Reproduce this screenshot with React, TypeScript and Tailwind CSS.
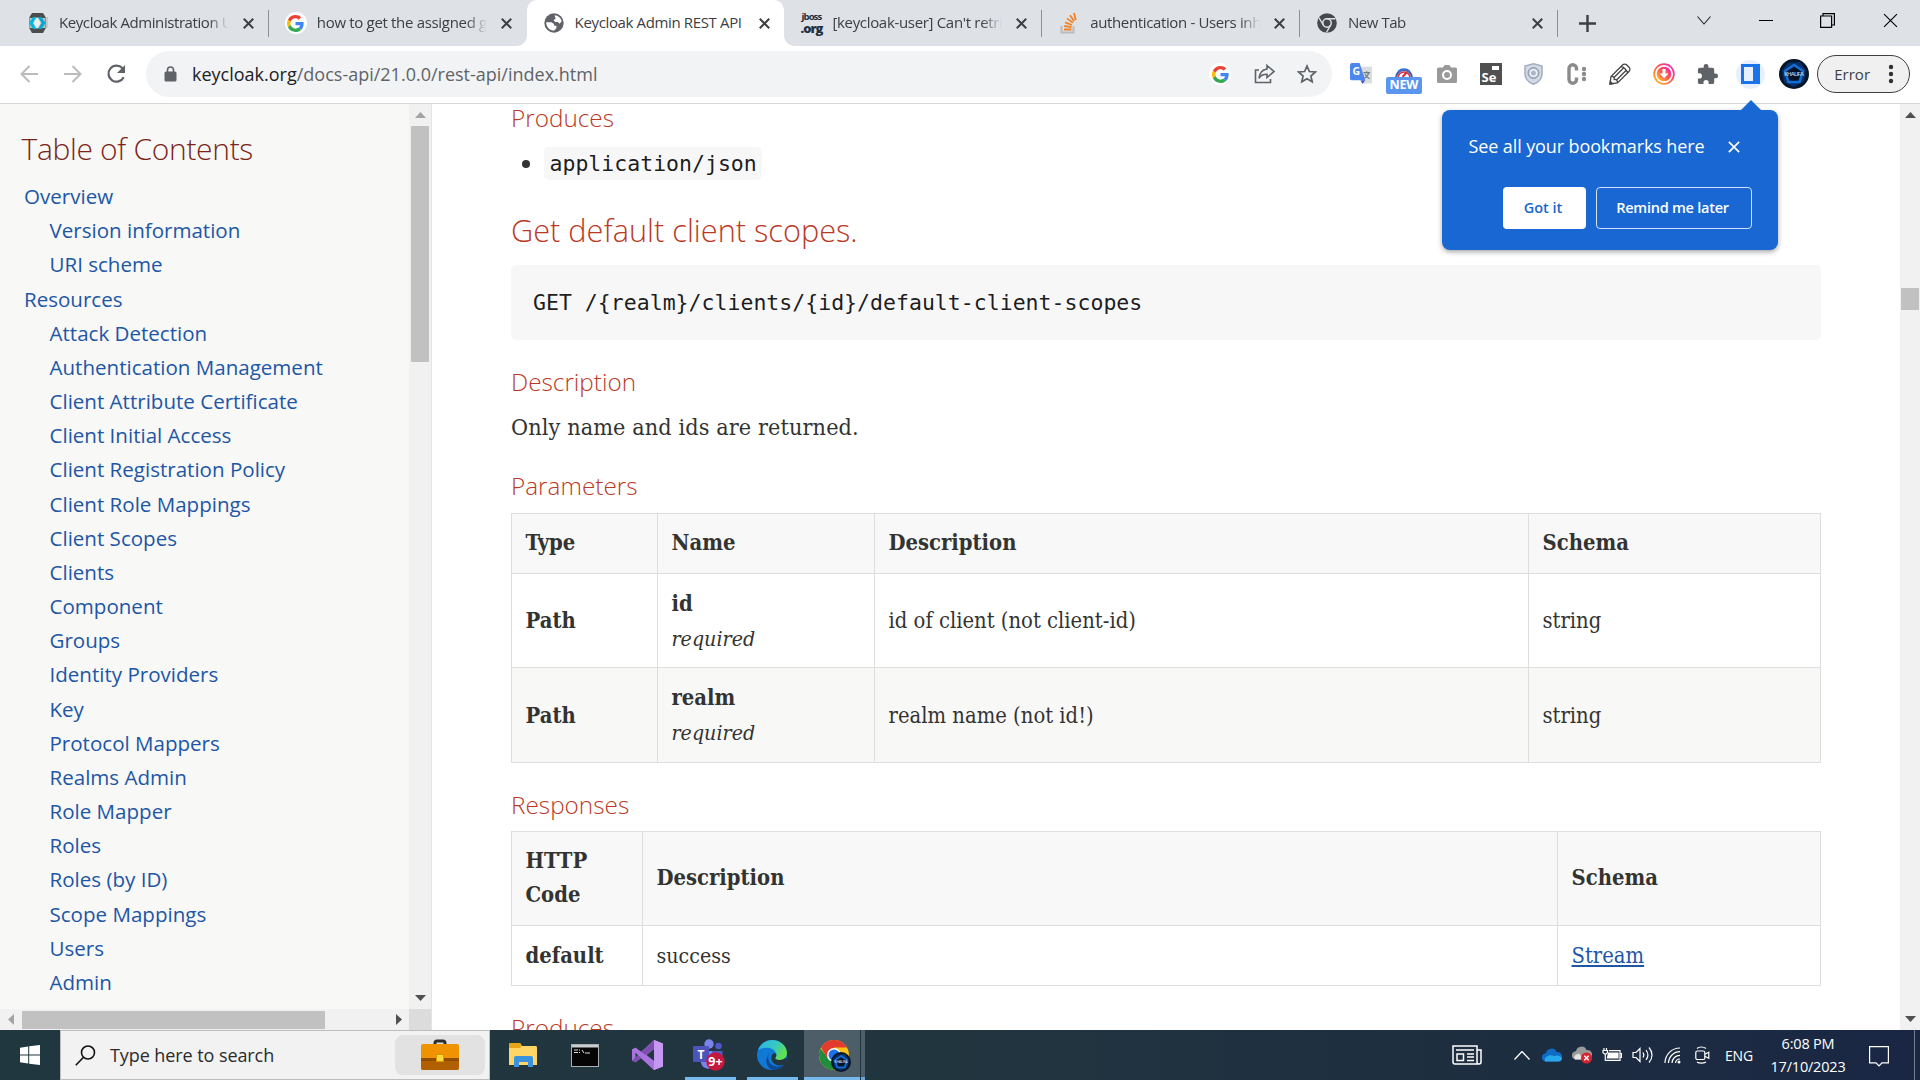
import React from 'react';

const serif = "font-['DejaVu_Serif_Condensed','DejaVu_Serif',serif]";

const toc: [string, boolean][] = [
  ['Overview', false],
  ['Version information', true],
  ['URI scheme', true],
  ['Resources', false],
  ['Attack Detection', true],
  ['Authentication Management', true],
  ['Client Attribute Certificate', true],
  ['Client Initial Access', true],
  ['Client Registration Policy', true],
  ['Client Role Mappings', true],
  ['Client Scopes', true],
  ['Clients', true],
  ['Component', true],
  ['Groups', true],
  ['Identity Providers', true],
  ['Key', true],
  ['Protocol Mappers', true],
  ['Realms Admin', true],
  ['Role Mapper', true],
  ['Roles', true],
  ['Roles (by ID)', true],
  ['Scope Mappings', true],
  ['Users', true],
  ['Admin', true],
];

function Google({ size = 18 }: { size?: number }) {
  return (
    <svg width={size} height={size} viewBox="0 0 48 48">
      <path fill="#ea4335" d="M24 9.5c3.54 0 6.71 1.22 9.21 3.6l6.85-6.85C35.9 2.38 30.47 0 24 0 14.62 0 6.51 5.38 2.56 13.22l7.98 6.19C12.43 13.72 17.74 9.5 24 9.5z" />
      <path fill="#4285f4" d="M46.98 24.55c0-1.57-.15-3.09-.38-4.55H24v9.02h12.94c-.58 2.96-2.26 5.48-4.78 7.18l7.73 6c4.51-4.18 7.09-10.36 7.09-17.65z" />
      <path fill="#fbbc05" d="M10.53 28.59c-.48-1.45-.76-2.99-.76-4.59s.27-3.14.76-4.59l-7.98-6.19C.92 16.46 0 20.12 0 24s.92 7.54 2.56 10.78l7.97-6.19z" />
      <path fill="#34a853" d="M24 48c6.48 0 11.93-2.13 15.89-5.81l-7.73-6c-2.15 1.45-4.92 2.3-8.16 2.3-6.26 0-11.57-4.22-13.47-9.91l-7.98 6.19C6.51 42.62 14.62 48 24 48z" />
    </svg>
  );
}

function GoogleBadge() {
  return (
    <span className="flex size-[22px] shrink-0 items-center justify-center rounded-full bg-white">
      <Google size={17} />
    </span>
  );
}

function KeycloakIcon() {
  return (
    <svg width="20" height="20" viewBox="0 0 20 20">
      <path d="M2 4h18v11H2z" fill="#c6c8ca" />
      <path d="M4 0h11l2.500 4v11.500L15 20H4l-2.500-4.500V4z" fill="#4d4d4d" />
      <path d="M2 5h15v10H2z" fill="#b9c3c8" />
      <path d="M8.500 4 5 10l3.500 6H5L1 10l4-6z" fill="#00b8e3" />
      <path d="m10 4 3.500 6-3.500 6h3.500l4-6-4-6z" fill="#00a9d6" />
      <path d="m8.500 4.500 1 0 3.200 5.500-3.200 5.500h-1L5.500 10z" fill="#e9eff1" />
    </svg>
  );
}

function Globe() {
  return (
    <svg width="20" height="20" viewBox="0 0 20 20">
      <circle cx="10" cy="10" r="9.700" fill="#5f6368" />
      <path d="M10.500 2.200c3.800.3 6.500 2.800 7.200 6l-2.200 2.600-1.700-1.700h-2.600L9.600 7.300l2-1.700z" fill="#fff" />
      <path d="M2.200 9.300h5.200l2.700 1.800v1.600h2.400v2.400l-2.200 2.500C5.700 17.600 2.100 14 2.200 9.300z" fill="#fff" />
    </svg>
  );
}

function JbossIcon() {
  return (
    <span className="flex h-[26px] w-[22px] flex-col items-center justify-center font-['Open_Sans',sans-serif] font-bold text-[#22303f]">
      <span className="text-[9.500px] leading-[11px] tracking-[-0.900px]">jboss</span>
      <span className="text-[13px] leading-[13px] font-extrabold tracking-[-1px]">.org</span>
    </span>
  );
}

function StackIcon() {
  return (
    <svg width="18" height="22" viewBox="0 0 18 22" fill="none">
      <path d="M1.500 14v6.500h12V14" stroke="#bcbbbb" strokeWidth="2" />
      <g stroke="#f48024" strokeWidth="1.800">
        <path d="M4 17.500h7.500M4.200 14l7.400 1.200M5 10.300l7 2.700M7 6.400l6 4.500M10 3.300l4.200 6M14 1l1.800 7" />
      </g>
    </svg>
  );
}

function ChromeMono() {
  return (
    <svg width="20" height="20" viewBox="0 0 20 20">
      <circle cx="10" cy="10" r="9.800" fill="#45494d" />
      <circle cx="10" cy="10" r="4.200" fill="none" stroke="#dee1e6" strokeWidth="1.500" />
      <path d="M10 5.800h8.500M6.300 12 2 4.800M13.600 12.200 9.400 19.500" stroke="#dee1e6" strokeWidth="1.400" />
    </svg>
  );
}

function CloseX({ size = 10, color = '#3c4043', w = 2 }: { size?: number; color?: string; w?: number }) {
  return (
    <svg width={size} height={size} viewBox="0 0 10 10" className="shrink-0">
      <path d="M.7.7l8.600 8.600M9.300.7.7 9.300" stroke={color} strokeWidth={w * 10 / size} />
    </svg>
  );
}

function Tab({ icon, title, active, divider, spacing }: { icon: React.ReactNode; title: string; active?: boolean; divider?: boolean; spacing: string }) {
  return (
    <div className={`relative flex h-full w-[257.800px] shrink-0 items-center pl-[16px] ${active ? 'rounded-t-[10px] bg-white' : ''}`}>
      {active && (
        <>
          <span className="absolute bottom-0 -left-[10px] size-[10px] bg-[radial-gradient(circle_at_0_0,#dee1e6_9.500px,#fff_10px)]" />
          <span className="absolute -right-[10px] bottom-0 size-[10px] bg-[radial-gradient(circle_at_100%_0,#dee1e6_9.500px,#fff_10px)]" />
        </>
      )}
      <span className="flex w-[22px] shrink-0 justify-center">{icon}</span>
      <span className={`mb-[2px] ml-[10px] w-[170px] overflow-hidden text-[15px] leading-[24px] whitespace-nowrap text-[#3c4043] ${spacing} ${active ? '' : 'mask-[linear-gradient(to_right,#000_88%,transparent)]'}`}>
        {title}
      </span>
      <span className="ml-[14px] flex"><CloseX size={11} /></span>
      {divider && <span className="absolute top-[10px] right-0 h-[27px] w-px bg-[#8d9196]" />}
    </div>
  );
}

function ToolSlot({ children }: { children: React.ReactNode }) {
  return <span className="relative flex h-[46px] w-[43.300px] shrink-0 items-center justify-center">{children}</span>;
}

function ProfileBadge({ size }: { size: number }) {
  return (
    <svg width={size} height={size} viewBox="0 0 30 30">
      <circle cx="15" cy="15" r="15" fill="#061527" />
      <path d="M3 12 9 4l12-1 6 9-2 10-10 6-10-5z" fill="#06336e" />
      <path d="m15 6 9 6-3.500 11h-11L6 12z" fill="#051225" stroke="#1170d8" strokeWidth="2.500" />
      <text x="15" y="17" textAnchor="middle" fontSize="6" fontWeight="600" fill="#b8cde4" fontFamily="Open Sans" textLength="20">KHALIFA</text>
    </svg>
  );
}

function Toolbar() {
  return (
    <div className="flex h-[58px] shrink-0 items-center border-b border-[#d5d7da] bg-white pb-[1px]">
      <div className="flex w-[146px] items-center gap-[22px] pl-[19px]">
        <svg width="21" height="20" viewBox="0 0 21 20" fill="none" stroke="#babcbe" strokeWidth="2"><path d="M19 10H3M10.500 2 2.500 10l8 8" /></svg>
        <svg width="21" height="20" viewBox="0 0 21 20" fill="none" stroke="#babcbe" strokeWidth="2"><path d="M2 10h16M10.500 2l8 8-8 8" /></svg>
        <svg width="22" height="20" viewBox="0 0 22 20" fill="none"><path d="M18.700 13.200A8 8 0 1 1 17.500 4.300" stroke="#5f6368" strokeWidth="2.200" /><path d="M20 1v8h-8z" fill="#5f6368" /></svg>
      </div>
      <div className="flex h-[46px] w-[1186px] shrink-0 items-center rounded-full bg-[#f1f3f4] pl-[18px]">
        <svg width="13" height="16" viewBox="0 0 13 16"><path d="M3.500 6V4a3 3 0 0 1 6 0v2" stroke="#5f6368" strokeWidth="1.600" fill="none" /><rect x=".5" y="5.500" width="12" height="10" rx="1.500" fill="#5f6368" /></svg>
        <span className="ml-[15px] text-[18px] whitespace-nowrap text-[#5f6368]"><span className="text-[#202124]">keycloak.org</span>/docs-api/21.0.0/rest-api/index.html</span>
        <span className="flex-1" />
        <GoogleBadge />
        <svg className="ml-[23px]" width="21" height="20" viewBox="0 0 21 20" fill="none" stroke="#5f6368" strokeWidth="1.600"><path d="M5 6H1.500v12.500h15V15" /><path d="M13 1.500 20 7.500l-7 6v-3.200c-4 0-6.500 1-8 4 .4-5 3.500-8.600 8-9.300z" /></svg>
        <svg className="mr-[15px] ml-[22px]" width="20" height="20" viewBox="0 0 20 20" fill="none" stroke="#5f6368" strokeWidth="1.700"><path d="m10 2 2.400 5.500 6 .5-4.500 4 1.300 5.800L10 14.700l-5.200 3.100L6.100 12 1.600 8l6-.5z" /></svg>
      </div>
      <div className="ml-[7px] flex items-center">
        <ToolSlot>
          <svg width="22" height="22" viewBox="0 0 23 23"><path d="M8 4h13.500a1.500 1.500 0 0 1 1.500 1.500V20a1.500 1.500 0 0 1-1.500 1.500H14z" fill="#dadce0" /><path d="M11 18h5l-3 4z" fill="#3a5bb5" /><path d="M1.500 0H10l6 18H1.500A1.500 1.500 0 0 1 0 16.500v-15z" fill="#4c86ee" /><text x="2.500" y="13" fontSize="11" fontWeight="700" fill="#fff" fontFamily="Open Sans">G</text><path d="M14 10h7M17.500 8.500V10M19.500 10c-.5 3-2.500 5-4.500 6M15.500 11.500c1 2 3 4 5 5" stroke="#6b7f87" strokeWidth="1.200" fill="none" /></svg>
        </ToolSlot>
        <ToolSlot>
          <svg className="absolute top-[14px]" width="20" height="18" viewBox="0 0 20 18"><path d="M2 13a8 8 0 0 1 16 0" fill="#fff" stroke="#3b5fa8" strokeWidth="2.200" /><path d="M4.500 6.500A8 8 0 0 1 15.500 6.500" fill="none" stroke="#3f6fd0" strokeWidth="2.200" /><path d="M4 13a6 6 0 0 1 12 0" fill="none" stroke="#d92f46" strokeWidth="1.600" /><path d="m8.500 12 4.500-5" stroke="#d92f36" strokeWidth="2" /></svg>
          <span className="absolute top-[26px] flex h-[17px] w-[36px] items-center justify-center rounded-[2px] bg-[#5a96ef] text-[12.500px] font-bold tracking-[-0.200px] text-white">NEW</span>
        </ToolSlot>
        <ToolSlot>
          <svg width="20" height="18" viewBox="0 0 20 18"><path d="M6 2.500 7.500 0h5L14 2.500h4.500A1.500 1.500 0 0 1 20 4v12.500a1.500 1.500 0 0 1-1.500 1.500h-17A1.500 1.500 0 0 1 0 16.500V4a1.500 1.500 0 0 1 1.500-1.500z" fill="#9a9a9a" /><circle cx="10" cy="10" r="4" fill="#9a9a9a" stroke="#fff" strokeWidth="2" /></svg>
        </ToolSlot>
        <ToolSlot>
          <span className="relative flex size-[22px] items-end bg-[#505050] pl-[2px] text-[13px] leading-[15px] font-bold text-white">Se<span className="absolute top-[3px] right-[3px] h-[4px] w-[7px] bg-white" /></span>
        </ToolSlot>
        <ToolSlot>
          <svg width="19" height="22" viewBox="0 0 19 22"><path d="M9.500.8 18 3v8c0 5-4 8.500-8.500 10.300C5 19.500 1 16 1 11V3z" fill="#d3dae5" stroke="#a3adbd" strokeWidth="1.500" /><circle cx="9.500" cy="10" r="5.500" fill="#a9b6c8" stroke="#8f9db2" /><circle cx="9.500" cy="10" r="3.300" fill="none" stroke="#eef2f7" strokeWidth="1.600" /></svg>
        </ToolSlot>
        <ToolSlot>
          <svg width="20" height="22" viewBox="0 0 20 22" fill="none"><path d="M9.500 7.500V5.500a3.700 3.700 0 0 0-7.500 0v11a3.700 3.700 0 0 0 7.500 0V14.500" stroke="#8b8b8b" strokeWidth="3.400" /><g fill="#8b8b8b"><circle cx="17" cy="6" r="2.200" /><circle cx="17" cy="11" r="2.200" /><circle cx="17" cy="16" r="2.200" /></g></svg>
        </ToolSlot>
        <ToolSlot>
          <svg width="22" height="22" viewBox="0 0 22 22" fill="none" stroke="#454545" strokeWidth="1.300"><path d="m1 21 1-7.500L13.500 2a3 3 0 0 1 4.300 0l2.200 2.200a3 3 0 0 1 0 4.300L8.500 20zM2 13.500c2.500-.5 3.500.7 3.200 3 2.300-.3 3.500 1 3.300 3.500M12 3.500c2.500.3 6 3.500 6.500 6.500M5 14.500 14.500 5M7.500 17l9.500-9.500" /><path d="m1 21 .3-2.500 2.200 2.200z" fill="#454545" /></svg>
        </ToolSlot>
        <ToolSlot>
          <svg width="22" height="22" viewBox="0 0 22 22" fill="none"><defs><linearGradient id="dl" x1="0" y1="1" x2="1" y2="0"><stop stopColor="#ffc01a" /><stop offset=".5" stopColor="#ff5a4a" /><stop offset="1" stopColor="#f01ec5" /></linearGradient></defs><circle cx="11" cy="11" r="9.900" stroke="url(#dl)" strokeWidth="1.700" /><circle cx="11" cy="11" r="6" stroke="url(#dl)" strokeWidth="2.600" fill="#ff5a5a" /><path d="M9.500 6h3v4.500h3L11 15.500 6.500 10.500h3z" fill="#fff" /></svg>
        </ToolSlot>
        <ToolSlot>
          <svg width="23" height="23" viewBox="0 0 24 24" fill="#5f6368"><path d="M20.500 11H19V7a2 2 0 0 0-2-2h-4V3.500a2.500 2.500 0 0 0-5 0V5H4a2 2 0 0 0-2 2v3.800h1.500a2.700 2.700 0 0 1 0 5.400H2V20a2 2 0 0 0 2 2h3.800v-1.500a2.700 2.700 0 0 1 5.400 0V22H17a2 2 0 0 0 2-2v-4h1.500a2.500 2.500 0 0 0 0-5z" /></svg>
        </ToolSlot>
        <ToolSlot>
          <span className="flex size-[29px] items-center justify-center rounded-full bg-[#e8f0fe]"><span className="flex h-[20px] w-[19px] border-[3px] border-r-[7px] border-[#1a73e8] bg-[#e8f0fe]" /></span>
        </ToolSlot>
        <ToolSlot><ProfileBadge size={30} /></ToolSlot>
      </div>
      <div className="ml-[2px] flex h-[38px] w-[93px] items-center rounded-full border-[1.500px] border-[#3c4043] bg-[#f0f0f0] pl-[16px]">
        <span className="text-[15px] text-[#3c4043]">Error</span>
        <svg className="ml-[18px]" width="6" height="20" viewBox="0 0 6 20" fill="#303134"><circle cx="3" cy="3" r="2.200" /><circle cx="3" cy="10" r="2.200" /><circle cx="3" cy="17" r="2.200" /></svg>
      </div>
    </div>
  );
}

function TabStrip() {
  return (
    <div className="flex h-[46px] shrink-0 bg-[#dee1e6] pl-[11px]">
      <Tab icon={<KeycloakIcon />} title="Keycloak Administration UI" divider spacing="tracking-[-0.420px]" />
      <Tab icon={<GoogleBadge />} title="how to get the assigned groups" spacing="tracking-[-0.320px]" />
      <Tab icon={<Globe />} title="Keycloak Admin REST API" active spacing="tracking-[-0.360px]" />
      <Tab icon={<JbossIcon />} title="[keycloak-user] Can't retrieve" divider spacing="tracking-[-0.320px]" />
      <Tab icon={<StackIcon />} title="authentication - Users inherit" divider spacing="tracking-[-0.360px]" />
      <Tab icon={<ChromeMono />} title="New Tab" divider spacing="tracking-[-0.450px]" />
      <div className="flex flex-1 items-center">
        <svg className="ml-[21px]" width="17" height="17" viewBox="0 0 17 17"><path d="M8.500 0v17M0 8.500h17" stroke="#3c4043" strokeWidth="2.400" /></svg>
        <div className="mb-[6px] ml-auto flex items-center">
          <svg width="14" height="9" viewBox="0 0 14 9" fill="none" stroke="#222" strokeWidth="1.100"><path d="m.5.5 6.500 7.500L13.500.5" /></svg>
          <span className="ml-[48px] h-px w-[14px] bg-black" />
          <svg className="ml-[47px]" width="15" height="15" viewBox="0 0 15 15" fill="none" stroke="#000" strokeWidth="1.200"><path d="M.6 3h11v11.400H.6zM3 3V.6h11.400V12h-2.800" /></svg>
          <span className="mr-[22px] ml-[48px] flex"><CloseX size={15} color="#000" w={1.1} /></span>
        </div>
      </div>
    </div>
  );
}

function Arrow({ dir, color = '#505050' }: { dir: 'up' | 'down' | 'left' | 'right'; color?: string }) {
  const d = { up: 'M0 8 5.500 2 11 8z', down: 'M0 3h11L5.500 9z', left: 'M8 0v11L2 5.500z', right: 'M3 0v11l6-5.500z' }[dir];
  return <svg width="11" height="11" viewBox="0 0 11 11" className="shrink-0"><path d={d} fill={color} /></svg>;
}

function Sidebar() {
  return (
    <aside className="flex h-full w-[432px] shrink-0 flex-col border-r border-[#e4e4e2] bg-[#f8f8f7]">
      <div className="flex min-h-0 flex-1">
        <div className="w-[409px] overflow-hidden font-['Open_Sans',sans-serif]">
          <h2 className="mt-[22px] ml-[21.500px] h-[46px] text-[30px] leading-[46px] font-light tracking-[-0.330px] text-[#7a2518]">Table of Contents</h2>
          <ul className="mt-[7px]">
            {toc.map(([t, nested]) => (
              <li key={t} className={`h-[34.180px] text-[20.550px] leading-[34px] whitespace-nowrap text-[#2156a5] ${nested ? 'pl-[49.500px]' : 'pl-[24px]'}`}>{t}</li>
            ))}
          </ul>
        </div>
        <div className="flex w-[22px] flex-col items-center bg-[#f1f1f1] pt-[6px] pb-[6px]">
          <Arrow dir="up" color="#a3a3a3" />
          <span className="mt-[5px] h-[236px] w-[18px] bg-[#c1c1c1]" />
          <span className="mt-auto flex"><Arrow dir="down" /></span>
        </div>
      </div>
      <div className="flex h-[21px] shrink-0 items-center bg-[#f1f1f1]">
        <span className="flex w-[22px] justify-center"><Arrow dir="left" color="#a3a3a3" /></span>
        <span className="mt-px h-[18px] w-[303px] bg-[#c1c1c1]" />
        <span className="mr-[5px] ml-auto flex"><Arrow dir="right" /></span>
        <span className="h-full w-[22px] bg-[#dcdcdc]" />
      </div>
    </aside>
  );
}

const h5 = "font-['Open_Sans',sans-serif] text-[24.300px] font-light text-[#ba3925] whitespace-nowrap";
const th = 'border border-[#dedede] pl-[13.500px] pb-[2px] text-left align-middle font-bold leading-[34px]';
const td = 'border border-[#dedede] pl-[13.500px] align-middle leading-[35px]';

function Content() {
  return (
    <main className={`min-w-0 flex-1 overflow-hidden bg-white pl-[79px] text-[21.800px] tracking-[0.010px] text-[#333332] ${serif}`}>
      <div className="w-[1310px]">
        <h5 className={`-mt-[2px] h-[32px] leading-[32px] ${h5}`}>Produces</h5>
        <div className="mt-[13px] flex h-[33px] items-center">
          <span className="ml-[11px] size-[8px] rounded-full bg-[#333332]" />
          <code className="ml-[14px] flex h-[33px] w-[218px] items-center rounded-[5px] bg-[#f7f7f8] pt-[2px] pl-[5.500px] font-['DejaVu_Sans_Mono',monospace] text-[21.500px] text-black/90">application/json</code>
        </div>
        <h4 className="mt-[28px] h-[44px] font-['Open_Sans',sans-serif] text-[30.700px] leading-[44px] font-light whitespace-nowrap text-[#ba3925]">Get default client scopes.</h4>
        <pre className="mt-[13px] flex h-[75px] items-center rounded-[5px] bg-[#f7f7f8] pt-[2px] pl-[22px] font-['DejaVu_Sans_Mono',monospace] text-[21.520px] text-black/90">{'GET /{realm}/clients/{id}/default-client-scopes'}</pre>
        <h5 className={`mt-[26px] h-[32px] leading-[32px] ${h5}`}>Description</h5>
        <p className="mt-[11px] h-[36px] text-[23.200px] leading-[36px] tracking-[0.100px]">Only name and ids are returned.</p>
        <h5 className={`mt-[25px] h-[32px] leading-[32px] ${h5}`}>Parameters</h5>
        <table className="mt-[11px] w-[1310px] table-fixed border-collapse">
          <colgroup><col className="w-[146px]" /><col className="w-[217px]" /><col className="w-[654px]" /><col /></colgroup>
          <thead><tr className="h-[60px] bg-[#f7f8f7]"><th className={th}>Type</th><th className={th}>Name</th><th className={th}>Description</th><th className={th}>Schema</th></tr></thead>
          <tbody>
            <tr className="h-[94px]"><td className={td}><b>Path</b></td><td className={td}><b>id</b><br /><i className="text-[21.200px]">required</i></td><td className={td}>id of client (not client-id)</td><td className={td}>string</td></tr>
            <tr className="h-[95px] bg-[#f8f8f7]"><td className={td}><b>Path</b></td><td className={td}><b>realm</b><br /><i className="text-[21.200px]">required</i></td><td className={td}>realm name (not id!)</td><td className={td}>string</td></tr>
          </tbody>
        </table>
        <h5 className={`mt-[26px] h-[32px] leading-[32px] ${h5}`}>Responses</h5>
        <table className="mt-[10px] w-[1310px] table-fixed border-collapse">
          <colgroup><col className="w-[131px]" /><col className="w-[915px]" /><col /></colgroup>
          <thead><tr className="h-[94px] bg-[#f7f8f7]"><th className={th}>HTTP<br />Code</th><th className={th}>Description</th><th className={th}>Schema</th></tr></thead>
          <tbody>
            <tr className="h-[60px]"><td className={td}><b>default</b></td><td className={td}><span className="text-[21.200px]">success</span></td><td className={td}><span className="text-[#2156a5] underline">Stream</span></td></tr>
          </tbody>
        </table>
        <h5 className={`mt-[26px] h-[32px] leading-[32px] ${h5}`}>Produces</h5>
      </div>
    </main>
  );
}

function Popup() {
  return (
    <div className="absolute top-[110px] left-[1442px] h-[140px] w-[335.500px] rounded-[8px] bg-[#1967d2] text-white shadow-[0_2px_5px_rgba(0,0,0,0.350)]">
      <svg className="absolute -top-[10px] left-[299px]" width="20" height="10" viewBox="0 0 20 10"><path d="m0 10 10-10 10 10z" fill="#1967d2" /></svg>
      <div className="mt-[21px] flex h-[30px] items-center pl-[26.500px]">
        <span className="w-[237px] text-[18px] tracking-[-0.110px] whitespace-nowrap">See all your bookmarks here</span>
        <span className="mt-[2px] ml-[22px] flex"><CloseX size={12} color="#fff" w={1.7} /></span>
      </div>
      <div className="mt-[26px] flex justify-end gap-[10px] pr-[26px] text-[14.500px] font-semibold">
        <span className="flex h-[42px] w-[83px] items-center justify-center rounded-[4px] bg-white pr-[2px] text-[#1967d2]">Got it</span>
        <span className="flex h-[42px] w-[156px] items-center justify-center rounded-[4px] border border-white/80 pr-[2px] tracking-[-0.250px] whitespace-nowrap">Remind me later</span>
      </div>
    </div>
  );
}

function TaskSlot({ children, w, line, active }: { children: React.ReactNode; w: string; line?: boolean; active?: boolean }) {
  return (
    <span className={`relative flex h-full shrink-0 items-center justify-center ${w} ${active ? 'bg-[#4d5e68]' : ''}`}>
      {children}
      {line && <span className={`absolute bottom-0 h-[3px] bg-[#76b9ed] ${active ? 'w-full' : 'w-[51px]'}`} />}
    </span>
  );
}

function Taskbar() {
  return (
    <footer className="flex h-[50px] shrink-0 items-center bg-[linear-gradient(90deg,#20373f_0%,#21353f_50%,#1d2d40_80%,#1a2644_100%)] font-['Open_Sans',sans-serif] text-white">
      <span className="flex w-[60px] justify-center">
        <svg width="20" height="20" viewBox="0 0 20 20" fill="#fff"><path d="M0 2.800 8.200 1.500v8H0zM9.200 1.300 20 0v9.500H9.200zM0 10.500h8.200v8L0 17.300zM9.200 10.500H20V20L9.200 18.700z" /></svg>
      </span>
      <div className="flex h-[50px] w-[430px] items-center border border-[#bdbdbd] bg-[#f2f2f2] pl-[14px]">
        <svg width="21" height="21" viewBox="0 0 21 21" fill="none" stroke="#111" strokeWidth="1.600"><circle cx="13" cy="7.500" r="6.500" /><path d="M8.500 12.300.8 20.300" /></svg>
        <span className="ml-[14px] text-[18px] tracking-[-0.080px] whitespace-nowrap text-[#2b2b2b]">Type here to search</span>
        <span className="mr-[4px] ml-auto flex h-[40px] w-[90px] items-center justify-center rounded-[8px] bg-[#e2e2e2]">
          <svg width="38" height="32" viewBox="0 0 38 32"><path d="M14 6V4a2 2 0 0 1 2-2h6a2 2 0 0 1 2 2v2" fill="none" stroke="#2d2d2d" strokeWidth="3" /><rect y="5" width="38" height="26" rx="2" fill="#f09300" /><path d="M0 19h38v10a2 2 0 0 1-2 2H2a2 2 0 0 1-2-2z" fill="#b06000" /><path d="M0 19h38v3H0z" fill="#8f4d00" /><rect x="15.500" y="15.500" width="7" height="7" fill="#ffd83a" stroke="#d79500" /></svg>
        </span>
      </div>
      <div className="flex h-full items-center pl-[3px]">
        <TaskSlot w="w-[60px]">
          <svg width="28" height="24" viewBox="0 0 28 24"><path d="M0 1.500A1.500 1.500 0 0 1 1.500 0H11l2 3h13.500A1.500 1.500 0 0 1 28 4.500V22H0z" fill="#ffd566" /><path d="M0 1.500A1.500 1.500 0 0 1 1.500 0H11l2 3-2 2H0z" fill="#e8a317" /><path d="M5 24v-9a2 2 0 0 1 2-2h15a2 2 0 0 1 2 2v9h-5v-5h-9v5z" fill="#3b93db" /></svg>
        </TaskSlot>
        <TaskSlot w="w-[63px]">
          <svg width="28" height="23" viewBox="0 0 28 23"><rect x=".5" y=".5" width="27" height="22" fill="#050505" stroke="#a9b0b4" /><path d="M1 1h26v2.500H1z" fill="#c9ced1" /><path d="M3 6h4M8 6h1M8 8.500h1M11 6l2 3M14 9h5M3 8.500h4" stroke="#ddd" strokeWidth="1" /></svg>
        </TaskSlot>
        <TaskSlot w="w-[62px]">
          <svg width="31" height="30" viewBox="0 0 31 30"><path d="m22 0 9 3.500v23L22 30 9 18l-5.500 4.300L0 20.500v-11l3.500-1.800L9 12zM22 9l-7.500 6 7.500 6zM3.500 11.500v7L7 15z" fill="#a974dd" fillRule="evenodd" /><path d="m22 0 9 3.500v23L22 30z" fill="#c497f0" /><path d="M22 0v9L3.500 22.300 0 20.500z" fill="#7c4fb0" /><path d="M0 9.500l3.500-1.800L22 21v9z" fill="#a974dd" /></svg>
        </TaskSlot>
        <TaskSlot w="w-[64px]" line>
          <svg width="34" height="32" viewBox="0 0 34 32"><circle cx="16" cy="5" r="4.700" fill="#7b83eb" /><circle cx="25.500" cy="7" r="3.200" fill="#5059c9" /><path d="M8 12h14v9a7 7 0 0 1-14 3z" fill="#7b83eb" /><path d="M19 12h10.500v7a5 5 0 0 1-8 4z" fill="#5059c9" /><rect y="7" width="16" height="16" rx="1" fill="#4b53bc" /><text x="8" y="19.500" textAnchor="middle" fontSize="12" fontWeight="700" fill="#fff" fontFamily="Open Sans">T</text><circle cx="22.500" cy="22.500" r="9.300" fill="#c4183c" /><text x="22.500" y="26.500" textAnchor="middle" fontSize="12.500" fontWeight="700" fill="#fff" fontFamily="Open Sans">9+</text></svg>
        </TaskSlot>
        <TaskSlot w="w-[60px]" line>
          <svg width="30" height="30" viewBox="0 0 30 30"><defs><linearGradient id="e1" x1="0" y1="0" x2="1" y2=".5"><stop stopColor="#2fb0ee" /><stop offset=".6" stopColor="#36c9c0" /><stop offset="1" stopColor="#62e04c" /></linearGradient></defs><circle cx="15" cy="15" r="15" fill="#0f7ad6" /><path d="M1 10C4 3 9 0 15 0c9 0 15 6.500 15 13 0 4.500-3.500 7-7.500 7-3 0-5-1-4-2.500 1.300-1.600 1-3.500.5-4.500C17 9 13 7.500 9 7.800 5 8 2.500 9 1 10z" fill="url(#e1)" /><path d="M12 14c-2.500 5 1 12 8 12.500 3 .2 6-1 8.500-3.500C26 27.500 21 30 16 30c-7-1.500-9-11-4-16z" fill="#0e4a96" /><path d="M18.500 17.500c-1 1.500 1 2.500 4 2.500 3 0 5-1 6.500-2.500l1 3-1.500 3c-3 2-6 2.500-9 1.500-4-1.500-6.500-6-4.500-10 .5-1.200 2-2 3-2 1.500 1 1.700 3 .5 4.500z" fill="#22363f" /></svg>
        </TaskSlot>
        <span className="w-[2px]" />
        <TaskSlot w="w-[56px]" line active>
          <span className="relative ml-[4px] flex">
            <svg width="30" height="30" viewBox="0 0 30 30"><circle cx="15" cy="15" r="15" fill="#fbc116" /><path d="M15 15v15A15 15 0 0 1 1.500 8.500L9 18z" fill="#1e8e3e" /><path d="M2 7.500A15 15 0 0 1 28 7.500H15L8.500 18.500z" fill="#e33b2e" /><circle cx="15" cy="15" r="7" fill="#fff" /><circle cx="15" cy="15" r="5.500" fill="#1a73e8" /></svg>
            <span className="absolute top-[12px] left-[12px] flex"><ProfileBadge size={20} /></span>
          </span>
        </TaskSlot>
        <span className="relative ml-px h-full w-[4px] bg-[#4d5e68]"><span className="absolute bottom-0 h-[3px] w-full bg-[#6aa5d3]" /></span>
      </div>
      <div className="ml-auto flex h-full items-center">
        <svg width="30" height="20" viewBox="0 0 30 20" fill="none" stroke="#fff" strokeWidth="1.500"><path d="M25 5h4v12a2 2 0 0 1-4 0V1H1v16a2 2 0 0 0 2 2h24" /><path d="M4 5h18M15 9h7M15 12h7M15 15.500h7M5 9h6.500v6.500H5z" /></svg>
        <svg className="ml-[32px]" width="16" height="9" viewBox="0 0 16 9" fill="none" stroke="#fff" strokeWidth="1.300"><path d="m.5 8.500 7.500-8 7.500 8" /></svg>
        <svg className="ml-[12px]" width="20" height="14" viewBox="0 0 20 14"><path d="M4 13.500a4 4 0 0 1 0-8.300A5.500 5.500 0 0 1 14.500 4a4.500 4.500 0 0 1 1.500 9.500z" fill="#0f6cc4" /><path d="M3 13.500c-1-3 1-5 4-6 2-.6 4 0 5 .8 3-1.500 6.500-.8 8 2 0 2-1.500 3.200-3 3.200z" fill="#28a8ea" /></svg>
        <svg className="ml-[10px]" width="20" height="18" viewBox="0 0 20 18"><path d="M4 13.500a4 4 0 0 1 0-8.300A5.500 5.500 0 0 1 14.500 4a4.500 4.500 0 0 1 1.500 9.500z" fill="#9a9a9a" /><path d="M3 13.500c-2-3 0-5 4-6l5 6z" fill="#e3e3e3" /><circle cx="14.500" cy="12" r="5.500" fill="#d9222f" /><path d="m12.300 9.800 4.400 4.400m0-4.400-4.400 4.400" stroke="#fff" strokeWidth="1.500" /></svg>
        <svg className="ml-[10px]" width="20" height="14" viewBox="0 0 20 14" fill="none" stroke="#fff" strokeWidth="1.200"><path d="M1 2.500h4.500v2.300L3.300 6.500 1 4.800zM2 0v2.500M4.500 0v2.500M3.300 6.500V13M7 2.600h11v9.800H4M18.500 5.500h1v4h-1" /><path d="M6.500 5H16v5H5.500z" fill="#fff" /></svg>
        <svg className="ml-[10px]" width="21" height="18" viewBox="0 0 21 18" fill="none" stroke="#fff" strokeWidth="1.200"><path d="M1 6.500h3L8 2.500v13l-4-4H1zM11 6.500c1 1.500 1 3.500 0 5M14 4c2.300 3 2.300 7 0 10M17 1.500c4 4.500 4 10.500 0 15" /></svg>
        <svg className="ml-[11px]" width="17" height="17" viewBox="0 0 17 17" fill="none" stroke="#fff" strokeWidth="1.200"><path d="M1 16A15 15 0 0 1 16 1M4.500 16A11.500 11.500 0 0 1 16 4.700M8 16a8 8 0 0 1 8-7.700M11.500 16a4.500 4.500 0 0 1 4.500-4" /><circle cx="15" cy="15" r="1.500" fill="#fff" stroke="none" /></svg>
        <svg className="ml-[14px]" width="15" height="18" viewBox="0 0 15 18" fill="none" stroke="#fff" strokeWidth="1.200"><rect x=".8" y="5" width="9" height="8.500" rx="1.500" /><path d="m9.800 8.300 4-2v6l-4-2M2 2.500C4 .5 8.500.5 11 2.500M2 16c2 1.500 6.500 1.500 9 0" /></svg>
        <span className="mr-px ml-[15px] w-[28px] text-[14px] tracking-[-0.200px]">ENG</span>
        <div className="ml-[10px] flex w-[88px] flex-col items-center text-[14.500px] leading-[23px] tracking-[-0.200px] whitespace-nowrap">
          <span>6:08 PM</span>
          <span>17/10/2023</span>
        </div>
        <svg className="mt-[2px] ml-[17px]" width="20" height="21" viewBox="0 0 20 21" fill="none" stroke="#fff" strokeWidth="1.200"><path d="M.6.600h18.800v16.300h-6.400L10 20l-3-3.100H.6z" /></svg>
        <span className="mr-[5px] ml-[25px] h-[50px] w-px bg-white/40" />
      </div>
    </footer>
  );
}

export default function App() {
  return (
    <div className="relative flex h-[1080px] w-[1920px] flex-col overflow-hidden bg-white font-['Open_Sans',sans-serif]">
      <TabStrip />
      <Toolbar />
      <div className="flex min-h-0 flex-1">
        <Sidebar />
        <Content />
        <div className="flex w-[20px] shrink-0 flex-col items-center bg-[#f1f1f1] py-[6px]">
          <Arrow dir="up" />
          <span className="mt-[167px] h-[22px] w-[18px] bg-[#c1c1c1]" />
          <span className="mt-auto flex"><Arrow dir="down" /></span>
        </div>
      </div>
      <Taskbar />
      <Popup />
    </div>
  );
}
